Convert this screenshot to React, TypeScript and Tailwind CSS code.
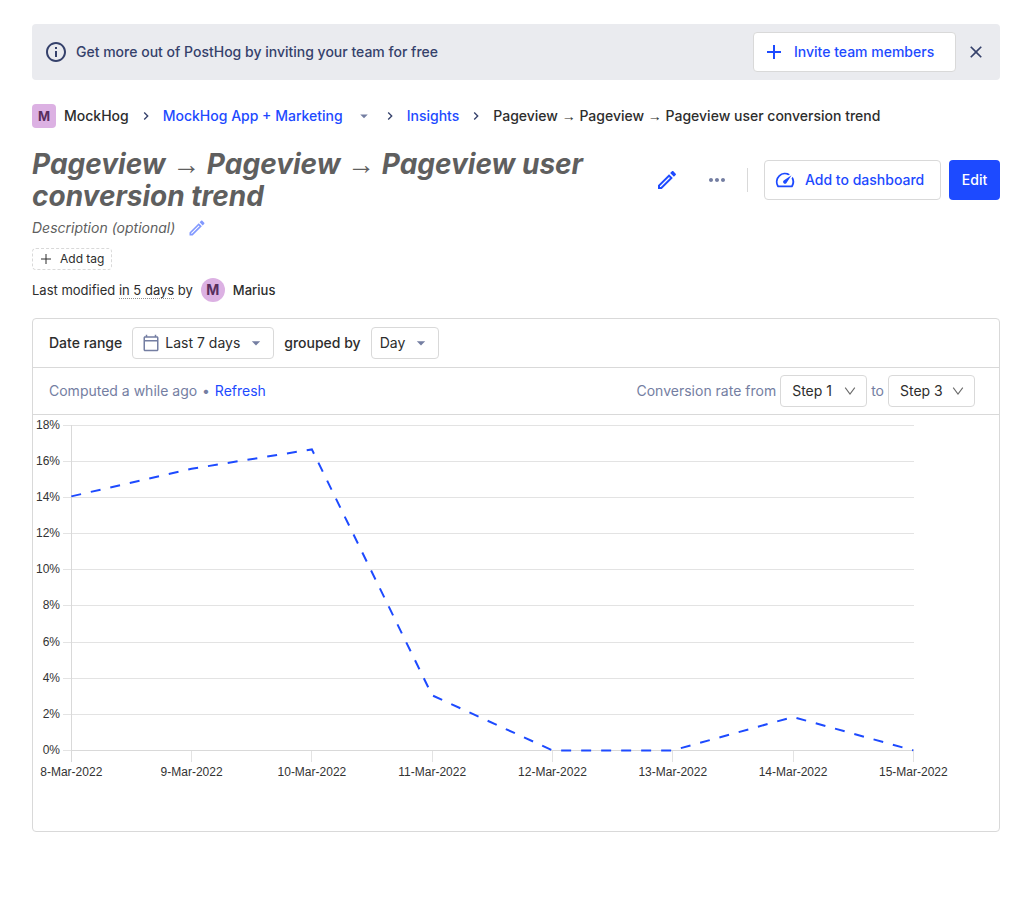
import type { ReactNode } from 'react';

const PENCIL =
  'M14.06 9.02l.92.92L5.92 19H5v-.92l9.06-9.06M17.66 3c-.25 0-.51.1-.7.29l-1.83 1.83 3.75 3.75 1.83-1.83c.39-.39.39-1.02 0-1.41l-2.34-2.34c-.2-.2-.45-.29-.71-.29zm-3.6 3.19L3 17.25V21h3.75L17.81 9.94l-3.75-3.75z';
const INFO =
  'M11 7h2v2h-2zm0 4h2v6h-2zm1-9C6.48 2 2 6.48 2 12s4.48 10 10 10 10-4.48 10-10S17.52 2 12 2zm0 18c-4.41 0-8-3.59-8-8s3.59-8 8-8 8 3.59 8 8-3.59 8-8 8z';
const PLUS = 'M19 13h-6v6h-2v-6H5v-2h6V5h2v6h6v2z';
const CLOSE =
  'M19 6.41L17.59 5 12 10.59 6.41 5 5 6.41 10.59 12 5 17.59 6.41 19 12 13.41 17.59 19 19 17.59 13.41 12z';
const GAUGE =
  'M20.38 8.57l-1.23 1.85a8 8 0 0 1-.22 7.58H5.07A8 8 0 0 1 15.58 6.85l1.85-1.23A10 10 0 0 0 3.35 19a2 2 0 0 0 1.72 1h13.85a2 2 0 0 0 1.74-1 10 10 0 0 0-.27-10.44zm-9.79 6.84a2 2 0 0 0 2.83 0l5.66-8.49-8.49 5.66a2 2 0 0 0 0 2.83z';
const CALENDAR =
  'M20 3h-1V1h-2v2H7V1H5v2H4c-1.1 0-2 .9-2 2v16c0 1.1.9 2 2 2h16c1.1 0 2-.9 2-2V5c0-1.1-.9-2-2-2zm0 18H4V10h16v11zm0-13H4V5h16v3z';
const CARET = 'M7 10l5 5 5-5z';
const CHEVRON = 'M10 6L8.59 7.41 13.17 12l-4.58 4.59L10 18l6-6z';
const ELLIPSIS =
  'M6 10c-1.1 0-2 .9-2 2s.9 2 2 2 2-.9 2-2-.9-2-2-2zm12 0c-1.1 0-2 .9-2 2s.9 2 2 2 2-.9 2-2-.9-2-2-2zm-6 0c-1.1 0-2 .9-2 2s.9 2 2 2 2-.9 2-2-.9-2-2-2z';

function Icon({ d, className }: { d: string; className: string }) {
  return (
    <svg viewBox="0 0 24 24" fill="currentColor" aria-hidden="true" className={`shrink-0 ${className}`}>
      <path d={d} />
    </svg>
  );
}

function Arrow() {
  return <span className="font-['Liberation_Sans',sans-serif] leading-none font-normal not-italic">→</span>;
}

function InsightName() {
  return (
    <>
      Pageview <Arrow /> Pageview <Arrow /> <span>Pageview user</span> <span>conversion trend</span>
    </>
  );
}

function Banner() {
  return (
    <div className="flex items-center rounded bg-[#eaebef] p-2 pr-3 pl-3 text-[#35416b]">
      <Icon d={INFO} className="size-6" />
      <p className="ml-2 flex-1 font-medium">Get more out of PostHog by inviting your team for free</p>
      <button className="flex h-10 min-w-[203px] items-center gap-2 rounded border border-[#d9d9d9] bg-white px-2 font-medium text-[#1d4aff]">
        <Icon d={PLUS} className="size-6" />
        Invite team members
      </button>
      <button aria-label="Close" className="ml-2 flex size-6 items-center justify-center">
        <Icon d={CLOSE} className="size-5" />
      </button>
    </div>
  );
}

const SEPARATOR = 'mx-[9px] size-4 text-[#35416b]';

function Breadcrumbs() {
  return (
    <nav aria-label="Breadcrumb" className="mt-6 flex h-6 items-center font-medium">
      <span className="mr-2 flex size-6 items-center justify-center rounded bg-[#dcb1e3] text-[13px] font-bold text-[#572e5e]">
        M
      </span>
      <span>MockHog</span>
      <Icon d={CHEVRON} className={SEPARATOR} />
      <a href="#project" className="flex items-center text-[#1d4aff]">
        MockHog App + Marketing
        <Icon d={CARET} className="ml-3 size-[18px] text-[#747ea2]" />
      </a>
      <Icon d={CHEVRON} className={SEPARATOR} />
      <a href="#insights" className="text-[#1d4aff]">
        Insights
      </a>
      <Icon d={CHEVRON} className={SEPARATOR} />
      <span>
        <InsightName />
      </span>
    </nav>
  );
}

function Header() {
  return (
    <header className="mt-5 flex items-start">
      <div className="min-w-0 flex-1">
        <h1 className="max-w-[600px] text-[28px] leading-8 font-bold text-[#5f5f5f] italic">
          <InsightName />
        </h1>
        <div className="mt-1 flex h-6 items-center gap-3">
          <p className="text-[#5f5f5f] italic">Description (optional)</p>
          <button aria-label="Edit description" className="text-[#8299ff]">
            <Icon d={PENCIL} className="size-5" />
          </button>
        </div>
        <button className="mt-2 flex h-[22px] items-center gap-2 rounded border border-dashed border-[#d9d9d9] px-[7px] text-xs">
          <svg viewBox="0 0 12 12" className="size-3" stroke="currentColor" fill="none" aria-hidden="true">
            <path d="M6 1v10M1 6h10" />
          </svg>
          Add tag
        </button>
        <div className="mt-2 flex h-6 items-center gap-2 text-[13px]">
          <span>
            Last modified <span className="border-b border-dotted border-[#8f8f8f]">in 5 days</span> by
          </span>
          <span className="flex size-6 items-center justify-center rounded-full bg-[#dcb1e3] text-sm font-bold text-[#572e5e]">
            M
          </span>
          <span className="font-medium">Marius</span>
        </div>
      </div>
      <div className="mt-3 flex h-10 items-center">
        <button aria-label="Edit name" className="text-[#1d4aff]">
          <Icon d={PENCIL} className="size-6" />
        </button>
        <button aria-label="More" className="ml-[26px] text-[#747ea2]">
          <Icon d={ELLIPSIS} className="size-6" />
        </button>
        <span className="mr-4 ml-[18px] h-6 w-px bg-[#d9d9d9]" />
        <button className="flex h-10 min-w-[177px] items-center gap-2 rounded border border-[#d9d9d9] bg-white px-2 font-medium text-[#1d4aff]">
          <Icon d={GAUGE} className="size-6 p-px" />
          Add to dashboard
        </button>
        <button className="ml-2 h-10 min-w-[51px] rounded bg-[#1d4aff] px-3 font-medium text-white">Edit</button>
      </div>
    </header>
  );
}

function Dropdown({ id, value, className, children }: { id: string; value: string; className: string; children?: ReactNode }) {
  return (
    <div className="relative">
      <select id={id} className={`block h-8 appearance-none rounded border border-[#d9d9d9] bg-white ${className}`}>
        <option>{value}</option>
      </select>
      {children}
    </div>
  );
}

const CARET_POS = 'pointer-events-none absolute top-[6px] right-2 size-5 text-[#747ea2]';

function StepChevron() {
  return (
    <svg
      viewBox="0 0 12 12"
      fill="none"
      stroke="#6b6b6b"
      strokeWidth="1.1"
      aria-hidden="true"
      className="pointer-events-none absolute top-[10px] right-[11px] size-3"
    >
      <path d="M1.2 2.6L6 9l4.8-6.4" />
    </svg>
  );
}

const LEFT = 38.3;
const BOTTOM = 335.4;
const STEP_X = 120.29;
const STEP_Y = 36.11;
const days = [8, 9, 10, 11, 12, 13, 14, 15];
const rates = [14.07, 15.6, 16.67, 3.05, 0, 0, 1.85, 0];
const ticks = [0, 2, 4, 6, 8, 10, 12, 14, 16, 18];

function Chart() {
  const px = (i: number) => LEFT + i * STEP_X;
  const py = (rate: number) => BOTTOM - (rate / 2) * STEP_Y;
  const crisp = (v: number) => Math.floor(v) + 0.5;
  const points = rates.map((r, i) => `${px(i)},${py(r)}`).join(' ');
  return (
    <svg
      viewBox="0 0 966 416"
      role="img"
      aria-label="Conversion trend"
      className="block h-auto w-full font-['Liberation_Sans',sans-serif] text-xs"
    >
      <g stroke="#e3e3e3">
        {ticks.map((t) => (
          <path key={t} d={`M30 ${crisp(py(t))}H881`} />
        ))}
        {days.map((d, i) => (
          <path key={d} d={`M${crisp(px(i))} 335V347`} />
        ))}
        <path d="M38.5 10V347M38 335.5H881" stroke="#d9d9d9" />
      </g>
      <g fill="#333333">
        {ticks.map((t) => (
          <text key={t} x="27" y={Math.round(py(t) + 3.5)} textAnchor="end">
            {t}%
          </text>
        ))}
        {days.map((d, i) => (
          <text key={d} x={px(i)} y="361" textAnchor="middle">
            {d}-Mar-2022
          </text>
        ))}
      </g>
      <polyline points={points} fill="none" stroke="#1d4aff" strokeWidth="2" strokeDasharray="10 10" />
    </svg>
  );
}

function InsightCard() {
  return (
    <section className="mt-4 rounded border border-[#d9d9d9]">
      <div className="flex h-12 items-center gap-[10px] px-4">
        <label htmlFor="range" className="font-medium">
          Date range
        </label>
        <Dropdown id="range" value="Last 7 days" className="w-[142px] pl-8">
          <Icon d={CALENDAR} className="pointer-events-none absolute top-[7px] left-[10px] size-[18px] text-[#747ea2]" />
          <Icon d={CARET} className={CARET_POS} />
        </Dropdown>
        <label htmlFor="interval" className="font-medium">
          grouped by
        </label>
        <Dropdown id="interval" value="Day" className="w-[68px] pl-2">
          <Icon d={CARET} className={CARET_POS} />
        </Dropdown>
      </div>
      <div className="flex h-12 items-center justify-between border-y border-[#d9d9d9] pr-6 pl-4 text-[#747ea2]">
        <p>
          Computed a while ago <span className="px-px">•</span>{' '}
          <a href="#refresh" className="text-[#1d4aff]">
            Refresh
          </a>
        </p>
        <div className="flex items-center gap-1">
          <label htmlFor="from">Conversion rate from</label>
          <Dropdown id="from" value="Step 1" className="w-[87px] pl-[11px] text-[#2d2d2d]">
            <StepChevron />
          </Dropdown>
          <label htmlFor="to">to</label>
          <Dropdown id="to" value="Step 3" className="w-[87px] pl-[11px] text-[#2d2d2d]">
            <StepChevron />
          </Dropdown>
        </div>
      </div>
      <Chart />
    </section>
  );
}

export default function App() {
  return (
    <main className="min-h-screen bg-white px-8 py-6 font-['Inter',sans-serif] text-sm text-[#2d2d2d]">
      <Banner />
      <Breadcrumbs />
      <Header />
      <InsightCard />
    </main>
  );
}
